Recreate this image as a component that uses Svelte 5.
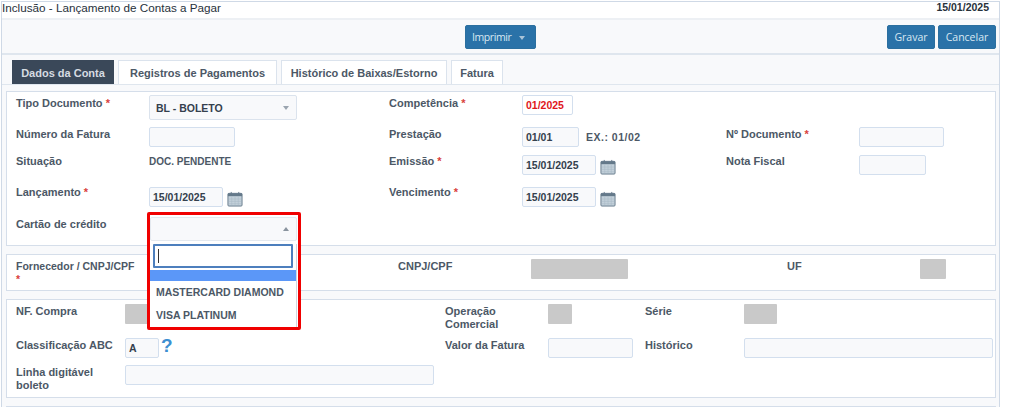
<script>
  const tabs = [
    { label: "Dados da Conta", width: 102 },
    { label: "Registros de Pagamentos", width: 159 },
    { label: "Histórico de Baixas/Estorno", width: 166 },
    { label: "Fatura", width: 52 },
  ];
  const cards = ["MASTERCARD DIAMOND", "VISA PLATINUM"];
</script>

{#snippet calendar()}
  <svg class="cal" width="16" height="16" viewBox="0 0 17 17">
    <rect x="1" y="2.500" width="15" height="13.500" rx="1" fill="#c3d0da" stroke="#64798a" />
    <rect x="1" y="2.500" width="15" height="3" fill="#64798a" />
    <path d="M4.500 1v3M12.500 1v3" stroke="#64798a" />
    <path d="M2 8.500h13M2 11h13M2 13.500h13M5 6v9M8.500 6v9M12 6v9" stroke="#a9b9c6" stroke-width=".6" />
  </svg>
{/snippet}

<div class="page">
  <header class="title">
    <span>Inclusão - Lançamento de Contas a Pagar</span>
    <b>15/01/2025</b>
  </header>

  <div class="toolbar">
    <span></span>
    <button class="btn print"><span>Imprimir</span> <i class="caret"></i></button>
    <div class="actions">
      <button class="btn save">Gravar</button>
      <button class="btn cancel">Cancelar</button>
    </div>
  </div>

  <nav class="tabs">
    {#each tabs as tab, i}
      <span class="tab" class:active={i === 0} style="width: {tab.width}px">{tab.label}</span>
    {/each}
  </nav>

  <section class="panel main">
    <div class="row r1">
      <div class="lb">Tipo Documento <em>*</em></div>
      <div class="select"><span>BL - BOLETO</span><i class="arrow"></i></div>
      <div class="lb">Competência <em>*</em></div>
      <div class="field w51 red">01/2025</div>
    </div>
    <div class="row r2">
      <div class="lb">Número da Fatura</div>
      <div class="field w86"></div>
      <div class="lb">Prestação</div>
      <div class="inline"><div class="field w57">01/01</div><span class="hint">EX.: 01/02</span></div>
      <div class="lb">Nº Documento <em>*</em></div>
      <div class="field w85"></div>
    </div>
    <div class="row r3">
      <div class="lb">Situação</div>
      <div class="value">DOC. PENDENTE</div>
      <div class="lb">Emissão <em>*</em></div>
      <div class="inline"><div class="field w74">15/01/2025</div>{@render calendar()}</div>
      <div class="lb">Nota Fiscal</div>
      <div class="field w67"></div>
    </div>
    <div class="row r4">
      <div class="lb">Lançamento <em>*</em></div>
      <div class="inline"><div class="field w74">15/01/2025</div>{@render calendar()}</div>
      <div class="lb">Vencimento <em>*</em></div>
      <div class="inline"><div class="field w74">15/01/2025</div>{@render calendar()}</div>
    </div>
    <div class="row r5">
      <div class="lb">Cartão de crédito</div>
    </div>
  </section>

  <section class="panel supplier">
    <div class="lb vendor">Fornecedor / CNPJ/CPF <em>*</em></div>
    <div class="lb">CNPJ/CPF</div>
    <div class="grey w97"></div>
    <div class="lb">UF</div>
    <div class="grey w26"></div>
  </section>

  <section class="panel purchase">
    <div class="lb">NF. Compra</div>
    <div class="grey w50"></div>
    <div class="lb">Operação Comercial</div>
    <div class="grey w24"></div>
    <div class="lb">Série</div>
    <div class="grey w33"></div>

    <div class="lb">Classificação ABC</div>
    <div class="inline abc"><div class="field w34">A</div><span class="help">?</span></div>
    <div class="lb">Valor da Fatura</div>
    <div class="field w85"></div>
    <div class="lb">Histórico</div>
    <div class="field w249"></div>

    <div class="lb">Linha digitável boleto</div>
    <div class="field w309 line"></div>
  </section>

  <section class="panel rest"></section>

  <div class="dropdown">
    <div class="select open"><i class="arrow up"></i></div>
    <div class="list">
      <div class="search"><span class="cursor"></span></div>
      <div class="highlight"></div>
      {#each cards as card}
        <div class="option">{card}</div>
      {/each}
    </div>
  </div>
</div>

<style>
  :global(body) {
    margin: 0;
    background: #fff;
    overflow: hidden;
  }

  .page {
    position: relative;
    box-sizing: border-box;
    width: 999px;
    height: 407px;
    margin: 1px 0 0 1px;
    border: solid #cfd9e6;
    border-width: 1px 1px 0;
    overflow: hidden;
    font: bold 10.500px "Liberation Sans", Arial, sans-serif;
    color: #4c5866;
    background: #f8f9fb;
  }

  .title {
    display: flex;
    justify-content: space-between;
    align-items: flex-start;
    height: 16px;
    padding: 0 10px 0 0;
    background: #fff;
    border-bottom: 2px solid #edf0f4;
    font-weight: normal;
    font-size: 11.700px;
    line-height: 11px;
    color: #27313b;
  }
  .title b {
    font-size: 10.500px;
  }

  .toolbar {
    display: grid;
    grid-template-columns: 1fr auto 1fr;
    align-items: center;
    box-sizing: border-box;
    height: 35px;
    padding: 0 3px;
    border-bottom: 2px solid #dfe6ee;
  }
  .actions {
    display: flex;
    justify-content: flex-end;
    gap: 3px;
  }
  .btn {
    height: 24px;
    padding: 0;
    border: 1px solid #2b6f9f;
    border-radius: 2px;
    background: #2a72a8;
    color: #d9e8f2;
    font: 10.500px "Open Sans", sans-serif;
  }
  .save { width: 48px; }
  .cancel { width: 58px; }
  .print {
    width: 71px;
    padding-right: 4px;
  }
  .print span {
    letter-spacing: -0.4px;
  }
  .caret {
    display: inline-block;
    margin-left: 5px;
    border: 3.500px solid transparent;
    border-top: 4px solid #a9c4d8;
    border-bottom: 0;
    vertical-align: middle;
  }

  .tabs {
    display: flex;
    align-items: flex-end;
    gap: 4px;
    height: 30px;
    padding-left: 10px;
    border-bottom: 1px solid #dfe6ee;
    box-sizing: border-box;
  }
  .tab {
    display: flex;
    align-items: center;
    justify-content: center;
    box-sizing: border-box;
    height: 24px;
    background: #fff;
    border: 1px solid #dbe3ed;
    border-bottom: 0;
    font-size: 11px;
  }
  .tab.active {
    background: #3a4859;
    border-color: #3a4859;
    color: #d6dbe1;
  }

  .panel {
    box-sizing: border-box;
    width: 990px;
    margin-left: 4px;
    background: #fff;
    border: 1px solid #d5deea;
  }
  .main {
    height: 155px;
    margin-top: 6px;
    padding: 3px 0 0 9px;
  }
  .row {
    display: grid;
    grid-template-columns: 133px 240px 133px 204px 133px 1fr;
  }
  .r1 { height: 32px; }
  .r1 .lb { padding-top: 2px; }
  .r2 { height: 28px; }
  .r2 .lb { padding-top: 1px; }
  .r3 { height: 32px; }
  .r3 .lb { padding-top: 0; }
  .r4 { height: 32px; }
  .r4 .lb { margin-top: -1px; padding-top: 0; }
  .r5 .lb { margin-top: -1px; padding-top: 0; }

  .lb {
    font-size: 11px;
    line-height: 13px;
    padding-top: 1px;
  }
  em {
    color: #d9413c;
    font-style: normal;
  }

  .field {
    box-sizing: border-box;
    height: 20px;
    padding-left: 3px;
    line-height: 18px;
    border: 1px solid #d3dfee;
    border-radius: 2px;
    background: #f8f9fb;
    color: #34404d;
  }
  .w34 { width: 34px; }
  .w51 { width: 51px; }
  .w57 { width: 57px; }
  .w67 { width: 67px; }
  .w74 { width: 74px; }
  .w85 { width: 85px; }
  .w86 { width: 86px; }
  .w249 { width: 249px; }
  .w309 { width: 309px; }
  .red {
    color: #e0161b;
    background: #fff;
  }
  .inline {
    display: flex;
    align-items: flex-start;
    gap: 4px;
  }
  .hint {
    margin-left: 3px;
    line-height: 20px;
    letter-spacing: 0.5px;
  }
  .value {
    font-size: 10px;
    line-height: 13px;
  }
  .cal {
    margin-top: 4px;
  }

  .select {
    position: relative;
    box-sizing: border-box;
    width: 148px;
    height: 25px;
    padding-left: 6px;
    line-height: 25px;
    border: 1px solid #dbe3ed;
    border-radius: 2px;
    background: #f8f9fb;
    color: #34404d;
  }
  .arrow {
    position: absolute;
    right: 7px;
    top: 10px;
    border: 3px solid transparent;
    border-top: 4px solid #9aa4af;
    border-bottom: 0;
  }
  .arrow.up {
    border-top: 0;
    border-bottom: 4px solid #8a949f;
  }

  .supplier {
    display: grid;
    grid-template-columns: 382px 133px 256px 133px 1fr;
    height: 37px;
    margin-top: 8px;
    padding: 4px 0 0 9px;
  }
  .vendor {
    width: 124px;
    font-size: 10.500px;
  }

  .grey {
    height: 20px;
    background: #c9c9c9;
    border-radius: 1px;
  }
  .w24 { width: 24px; }
  .w26 { width: 26px; }
  .w33 { width: 33px; }
  .w50 { width: 50px; }
  .w97 { width: 97px; }

  .purchase {
    display: grid;
    grid-template-columns: 109px 320px 103px 97px 99px 1fr;
    grid-template-rows: 34px 27px 1fr;
    height: 99px;
    margin-top: 8px;
    padding: 4px 0 0 9px;
  }
  .line {
    grid-column: 2 / 4;
  }
  .abc {
    gap: 2px;
  }
  .help {
    font: bold 19px/20px "Liberation Sans", sans-serif;
    color: #3d8fd1;
    margin-top: -2px;
  }

  .rest {
    height: 30px;
    margin-top: 8px;
  }

  .dropdown {
    position: absolute;
    left: 145px;
    top: 210px;
    box-sizing: border-box;
    width: 154px;
    height: 118px;
    padding-top: 2px;
    border: 3px solid #f00000;
    border-radius: 2px;
    background: #fff;
    overflow: hidden;
  }
  .open {
    width: 147px;
    height: 24px;
    border-color: #e4e9ef;
  }
  .open .arrow {
    top: 9px;
  }
  .list {
    box-sizing: border-box;
    width: 147px;
    height: 85px;
    border: solid #cfd6de;
    border-width: 0 1px 1px 0;
  }
  .search {
    box-sizing: border-box;
    width: 140px;
    height: 24px;
    margin: 3px 0 2px 3px;
    padding: 3px;
    border: 2px solid #4d7fbd;
    border-radius: 1px;
    background: #fff;
  }
  .cursor {
    display: block;
    width: 1px;
    height: 14px;
    background: #333;
  }
  .highlight {
    height: 11px;
    background: #5b97f8;
  }
  .option {
    padding-left: 6px;
    height: 23px;
    line-height: 23px;
  }
</style>
